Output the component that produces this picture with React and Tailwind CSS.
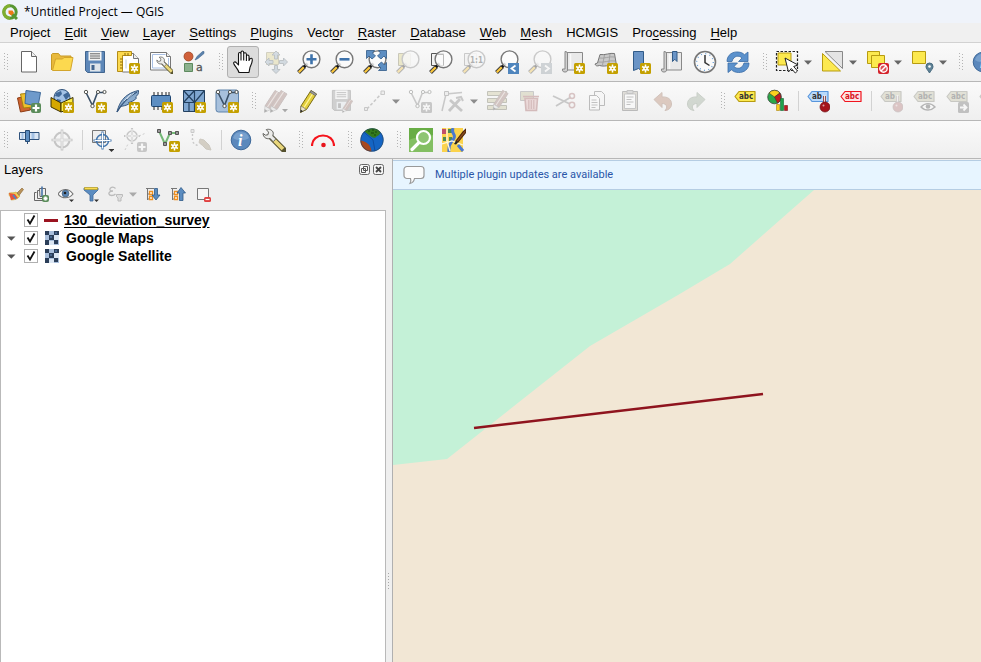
import React from "react";

const G = "#555753";

function Svg({ size = 24, children, className = "" }) {
  return (
    <svg width={size} height={size} viewBox={`0 0 ${size} ${size}`} fill="none" className={`shrink-0 ${className}`} aria-hidden="true">
      {children}
    </svg>
  );
}

/* ---------- shared pieces ---------- */

function Star({ x = 13, y = 13, color = "#c4a000" }) {
  return (
    <g transform={`translate(${x} ${y})`}>
      <rect width="11" height="11" rx="1.5" fill={color} />
      <path d="M5.5 1.6v7.8M2.1 3.5l6.8 4M8.9 3.5l-6.8 4" stroke="#fff" strokeWidth="1.5" />
      <circle cx="5.5" cy="5.5" r="2.2" fill="#fff" />
      <circle cx="5.5" cy="5.5" r=".8" fill={color} />
    </g>
  );
}

function Plus({ x = 14, y = 14, color = "#5a8c5a", s = 10 }) {
  return (
    <g transform={`translate(${x} ${y})`}>
      <rect width={s} height={s} rx="2" fill={color} />
      <path d={`M${s / 2} 1.5v${s - 3}M1.5 ${s / 2}h${s - 3}`} stroke="#fff" strokeWidth="2.2" />
    </g>
  );
}

function Lens({ children }) {
  return (
    <>
      <path d="M1.5 22.5l6-6" stroke="#3c3c3c" strokeWidth="4" />
      <path d="M1.8 22.2l5-5" stroke="#fcc83c" strokeWidth="2.2" />
      <path d="M7 17l3.5-3.5" stroke="#111" strokeWidth="2.6" />
      <circle cx="14.5" cy="9.3" r="8.4" fill="#fbfbfb" fillOpacity=".85" stroke="#777" strokeWidth="1.4" />
      {children}
    </>
  );
}

function Tag({ fill, stroke, color = "#333", text = "abc" }) {
  return (
    <>
      <path d="M6 2.5h16v10H6L2 7.5z" fill={fill} stroke={stroke} strokeWidth="1.2" strokeLinejoin="round" />
      {text && (
        <text x="6" y="10.4" fontSize="8" fontWeight="bold" fontFamily="DejaVu Sans Condensed, DejaVu Sans, sans-serif" fill={color}>
          {text}
        </text>
      )}
    </>
  );
}

function Nodes({ color = G, line = "#3a5068" }) {
  return (
    <>
      <path d="M3 3.5l6.5 13 5-13h7" stroke={line} strokeWidth="1.6" />
      <g fill="#fff" stroke={color}>
        <circle cx="3" cy="3" r="1.7" />
        <circle cx="9.5" cy="17" r="1.7" />
        <circle cx="15" cy="3" r="1.6" />
        <circle cx="21.5" cy="3" r="1.6" />
      </g>
    </>
  );
}

function Pencil({ fill = "#e3cf3c", edge = "#7a6b12" }) {
  return (
    <>
      <path d="M3 17L13 1.5l5.5 3.5-10 15.5-6 3z" fill={fill} stroke={edge} strokeLinejoin="round" />
      <path d="M6 18.5L15.5 3.5" stroke="#fff59c" strokeWidth="1.3" />
      <path d="M13 1.5l5.5 3.5-1 1.8L12 3.2z" fill="#999" stroke="#666" strokeWidth=".7" />
      <path d="M3 17l-.6 6.3 5.8-3z" fill="#eee5c8" stroke="#666" strokeWidth=".6" />
      <path d="M2.7 20.5l-.3 3 2.5-1.3z" fill="#222" />
    </>
  );
}

function DullPencil() {
  return (
    <>
      <path d="M3 17L13 1.5l6 3.5-10 15.500z" fill="#946c64" stroke="#7c6460" strokeLinejoin="round" />
      <path d="M5.500 18L15.500 3" stroke="#d9c9c4" strokeWidth="1.200" />
      <path d="M3 17l-.6 6.300 6.400-2.800z" fill="#ddd" stroke="#666" strokeWidth=".600" />
      <path d="M2.700 20l-.3 3.500 3-1.500z" fill="#333" />
    </>
  );
}

function Floppy({ body = "#5d87b8", edge = "#41658f" }) {
  return (
    <>
      <path d="M2.5 1.5h19v21H4.5l-2-2z" fill={body} stroke={edge} strokeLinejoin="round" />
      <path d="M5.5 1.5h13v9h-13z" fill="#f4f4f4" />
      <path d="M7 3.8h10M7 6h10M7 8.2h10" stroke="#555" strokeWidth=".9" />
      <path d="M7 13.5h10.5v8H7z" fill="#dfe5ea" />
      <path d="M8.5 15h3v5h-3z" fill={edge} />
    </>
  );
}

function Wrench() {
  return (
    <>
      <path d="M10 10l12 12" stroke="#55512f" strokeWidth="5.8" strokeLinecap="round" />
      <path d="M11 11l10 10" stroke="#ead77b" strokeWidth="3.8" />
      <path d="M1 5.5l2.5 1.700L6 6.700l.5-2.600L4.300 1.600c3-1 6.500.4 7 3.600L10.800 8l3 3-2.600 2.600-3.200-3.100C4 11.500 1.200 9 1 5.500z" fill="#ececea" stroke="#60605c" />
    </>
  );
}

function Thermo({ tone = "#a5141b", edge = "#701015" }) {
  return (
    <>
      <path d="M18.500 7v9" stroke={edge} strokeWidth="3" />
      <path d="M18.500 6v9" stroke="#e8e8e8" strokeWidth="1.600" />
      <circle cx="19" cy="18" r="5" fill={tone} stroke={edge} strokeWidth=".7" />
      <circle cx="17.5" cy="16.5" r="1" fill="#fff" opacity=".6" />
    </>
  );
}

const Target = ({ a = "#707070", cx = 12, cy = 12, r = 7.5, w = 2 }) => (
  <>
    <circle cx={cx} cy={cy} r={r} stroke={a} strokeWidth={w} />
    <path d={`M${cx} ${cy - r - 3}V${cy + r + 3}M${cx - r - 3} ${cy}H${cx + r + 3}`} stroke={a} strokeWidth={w + 0.6} />
    <path d={`M${cx} ${cy - r - 2}V${cy + r + 2}M${cx - r - 2} ${cy}H${cx + r + 2}`} stroke="#fff" strokeWidth="1" />
  </>
);

const Scroll = () => (
  <>
    <path d="M4 2.5h17.500v17.500H6" fill="#e9e9e9" stroke="#888" />
    <path d="M4 1.500c2 0 2.500 1 2.500 2.500v16c0 1.500-1 2-2.500 2s-2.500-.500-2.500-2v-1H4z" fill="#cfcfcf" stroke="#888" />
    <path d="M9.500 19V4" stroke="#f9f9f9" strokeWidth="1.500" />
  </>
);

const DashedBox = () => <path d="M1.5 1.500h21v19h-21z" stroke="#222" strokeWidth="1.2" strokeDasharray="2.5 1.5" />;

const CornerArrow = () => <path d="M18 20h6l-3 3.2z" fill="#222" />;

/* ---------- toolbar icons ---------- */

const icons = {
  newFile: (
    <>
      <path d="M4.5 1.5h10l5 5v15.5h-15z" fill="#fff" stroke="#666" strokeLinejoin="round" />
      <path d="M14.5 1.5v5h5" fill="#eee" stroke="#666" />
    </>
  ),
  open: (
    <>
      <path d="M1.5 20V4.5l1-1h6l2 2.5h10.5v4" fill="#e8b93c" stroke="#c79a26" />
      <path d="M2.5 20.500L5.500 9h7l1.500-1.500h9l-2.500 13z" fill="#fcd94f" stroke="#d3a52c" strokeLinejoin="round" />
    </>
  ),
  save: <Floppy />,
  newLayout: (
    <>
      <path d="M6.5 3.500h11l5 5V22h-16z" fill="#fff" stroke="#777" />
      <path d="M17.500 3.500v5h5" fill="#eee" stroke="#777" />
      <path d="M1.500 1.500h14v4h-9v16h-5z" fill="#fcd94f" stroke="#b38c17" />
      <path d="M4 9h2.500M4 12h2.500M4 15h2.500M4 18h2.500M9 3v2.500M12 3v2.500" stroke="#8a6a0c" />
      <path d="M10 9.500v9" stroke="#bcd" />
      <Star />
    </>
  ),
  layoutManager: (
    <>
      <path d="M1.5 2.500h16l4 4V20h-20z" fill="#fff" stroke="#777" />
      <path d="M3.500 4.500h13M3.500 4.500V18h16V8" stroke="#a9c0e4" />
      <path d="M17.500 2.500v4h4" fill="#eee" stroke="#777" />
      <g transform="translate(7 6) scale(.75)"><Wrench /></g>
    </>
  ),
  style: (
    <>
      <circle cx="6.500" cy="6.500" r="4.500" fill="#d0603a" stroke="#9c4120" strokeWidth=".8" />
      <path d="M13 10l2-3.500 5.500-5h1.500v2L16 8.500z" fill="#5b83ad" stroke="#41658f" strokeWidth=".6" />
      <path d="M2.500 13.500h8V21.500h-8z" fill="#8cb18d" stroke="#5d8a5e" />
      <text x="14" y="21" fontSize="11" fontFamily="DejaVu Sans, sans-serif" fill="#555" stroke="#555" strokeWidth=".3">a</text>
    </>
  ),
  pan: (
    <path
      d="M8 22.500c-1-4-4.500-6.500-5.300-9-.4-1.600 1.500-2.300 2.600-.9L7.500 15V4c0-2 2.300-2 2.500 0V2.500c0-2 2.500-2 2.700 0V4c.2-1.800 2.500-1.700 2.700.2V6c.4-1.500 2.500-1.400 2.600.4l.3 3.600c1.500-2.600 3.300-2 3 .4-.2 2.600-1.500 5-2.300 7l-1 5.100zM10 4v6.500M12.700 3.500v7M15.400 4.500v6.500M18 7v4"
      fill="#fff" stroke="#111" strokeWidth="1.1" strokeLinejoin="round"
    />
  ),
  panSel: (
    <>
      <path d="M2.500 2.500h12v12h-12z" fill="#d8ce82" stroke="#8f895f" />
      <g fill="#94aabc" stroke="#4f5f68" strokeWidth=".9">
        <path d="M12 1l4 4h-2.500v4h-3V5H8zM12 23.500l-4-4h2.500v-4h3v4H16zM1 12l4-4v2.500h4v3H5V16zM23.500 12l-4-4v2.500h-4v3h4V16z" />
      </g>
    </>
  ),
  zoomIn: <Lens><path d="M14.500 4.300v10M9.500 9.300h10" stroke="#3f73ab" strokeWidth="2.600" /></Lens>,
  zoomOut: <Lens><path d="M9.500 9.300h10" stroke="#3f73ab" strokeWidth="2.600" /></Lens>,
  zoomFull: (
    <>
      <Lens />
      <g fill="#5d8ec2" stroke="#315b88" strokeWidth=".8">
        <path d="M3.500.500h8L9.500 3l3 3L9 9 6 6 3.500 8.500zM23.500.500h-8L17.500 3l-3 3L18 9l3-3 2.500 2.500zM23.500 20.500h-8l2.500-2.500-3-3 3.500-3 3 3 2-2.500z" />
      </g>
    </>
  ),
  zoomSel: (
    <>
      <path d="M2.500 3.500h12v12h-12z" fill="#d8cf78" stroke="#77734c" />
      <Lens />
    </>
  ),
  zoomLayer: (
    <>
      <path d="M2.500 3.500h12v12h-12z" fill="#f3f3f3" stroke="#555" />
      <Lens><path d="M9 4.500h5.500v11" stroke="#bbb" /></Lens>
    </>
  ),
  zoomNative: (
    <>
      <path d="M2.500 3.500h12v12h-12z" fill="#eee" stroke="#777" />
      <Lens><text x="8" y="12.500" fontSize="8" fontWeight="bold" fontFamily="DejaVu Sans Condensed, sans-serif" fill="#333">1:1</text></Lens>
    </>
  ),
  zoomLast: (
    <Lens>
      <path d="M13 13h11v11H13z" fill="#4f85bd" /><path d="M20.500 15.500l-4 3 4 3" stroke="#fff" strokeWidth="1.800" />
    </Lens>
  ),
  zoomNext: (
    <Lens>
      <path d="M13 13h11v11H13z" fill="#8c979f" /><path d="M17 15.500l4 3-4 3" stroke="#fff" strokeWidth="1.800" />
    </Lens>
  ),
  newMap: <><Scroll /><Star /></>,
  newMap3d: (
    <>
      <path d="M6 4.500c5 1 10-2 14.500-1l2 12c-6-2-10 2-17 0-3 1-4 0-4.500-1.500L3.500 13z" fill="#c9c9c9" stroke="#777" />
      <path d="M5 8c5 1 10-2 16-1M4 12c6 1 11-2 17-1M10.500 5l-2 10M16 4l-1.500 12" stroke="#999" strokeWidth=".8" />
      <Star />
    </>
  ),
  newBookmark: <><path d="M6.500 1.500h10V22l-5-3.500-5 2z" fill="#6a94c6" stroke="#315b88" /><Star /></>,
  bookmarks: <><Scroll /><path d="M12.500 1.500h4.500v10l-2.200-2.200-2.300 2.200z" fill="#6a94c6" stroke="#315b88" /></>,
  clock: (
    <>
      <circle cx="12" cy="12" r="10.500" fill="#fafafa" stroke="#777" strokeWidth="1.600" />
      <circle cx="12" cy="12" r="8.300" stroke="#6aa0d8" strokeWidth="1.300" strokeDasharray="1 3.350" />
      <path d="M12 5v7.500l4.500 3" stroke="#333" strokeWidth="1.500" />
    </>
  ),
  refresh: (
    <g fill="#5b91cc" stroke="#3a6ca6" strokeWidth=".8" strokeLinejoin="round">
      <path d="M1 11.500c0-7 6-10 11-9.500 3 .2 5 1.200 6.500 2.700L22 2v9.500h-9.500L16 8c-3-3-8.500-2.500-10 3.500z" />
      <path d="M23 13c0 6.500-5.500 9.800-10.500 9.500-3 0-5.500-1.200-7-2.700L2 22.500V13h9.500L8 16.500c3 3 8.500 2.500 10-3.500z" />
    </g>
  ),
  select: (
    <>
      <path d="M3 3h13v12H3z" fill="#fce94f" stroke="#b79b10" />
      <DashedBox />
      <path d="M10 8l3.500 14 2.800-3.500 4 4.500 2.200-2-3.800-4.500L23 15z" fill="#fff" stroke="#222" strokeLinejoin="round" />
    </>
  ),
  selectValue: (
    <>
      <path d="M5 1.500h17.500v17z" fill="#e4e4e4" stroke="#888" />
      <path d="M2.500 3.500v17.500h18z" fill="#fce94f" stroke="#b79b10" />
    </>
  ),
  deselect: (
    <>
      <path d="M2.500 1.500h12v12h-12z" fill="#fce94f" stroke="#b79b10" />
      <path d="M6.500 5.500h13v12h-13z" fill="#fce94f" stroke="#b79b10" />
      <rect x="13" y="13" width="11" height="11" rx="2" fill="#d4232b" />
      <circle cx="18.500" cy="18.500" r="3.700" fill="#fff" fillOpacity=".2" stroke="#fff" strokeWidth="1.400" />
      <path d="M21 16l-5 5" stroke="#fff" strokeWidth="1.400" />
    </>
  ),
  selectLoc: (
    <>
      <path d="M2.500 1.500h13v12h-13z" fill="#fce94f" stroke="#b79b10" />
      <path d="M19.500 23c-1.500-3-3.500-4-3.500-6.500a3.500 3.500 0 017 0c0 2.500-2 3.500-3.500 6.500z" fill="#5f8397" stroke="#46697e" />
      <circle cx="19.500" cy="16.500" r="1.300" fill="#fff" />
    </>
  ),
  info: (
    <>
      <circle cx="12" cy="12" r="9.800" fill="#5b88bc" stroke="#3d6899" />
      <path d="M4 10a8.300 8.300 0 0116 0c-4 3-12 3-16 0z" fill="#8bb0d8" opacity=".6" />
      <text x="9" y="17.500" fontSize="16" fontWeight="bold" fontStyle="italic" fontFamily="Liberation Serif, serif" fill="#fff">i</text>
    </>
  ),
  dataSource: (
    <>
      <path d="M.500 9l10-2 3 14-10 2z" fill="#cf6430" stroke="#8d3c14" />
      <path d="M3.500 5l11-1 1 14-9 1z" fill="#eec02d" stroke="#a8830d" />
      <path d="M9 1.500l14.500 2-2.500 14-13-3z" fill="#6e9acb" stroke="#3d6899" />
      <Plus />
    </>
  ),
  geopackage: (
    <>
      <circle cx="12" cy="8.500" r="8" fill="#a3c2e6" stroke="#2d5078" />
      <path d="M6 4l5-2 1 3-3 3-4-1zM13 6l5-3 1.500 4-3.500 4zM7 10l4 1-1 3H6z" fill="#3f6797" />
      <path d="M1 8.500l10 5.500v9L1 18z" fill="#d6a800" stroke="#3b3000" />
      <path d="M11 14l12-5.500V19l-12 4z" fill="#fced4a" stroke="#3b3000" />
      <Star />
    </>
  ),
  shapefile: <><Nodes /><Star /></>,
  spatialite: (
    <>
      <path d="M1 23c2-8 6-18 21.500-21.500.500 3-1 5-3 6.500l1 1c-2 3-6 4-8 4.500l1 1C10 17 6 17 4.500 17.500z" fill="#8aabcd" stroke="#35567e" />
      <path d="M1 23C6 14 12 8 21 3" stroke="#35567e" strokeWidth="1.200" />
      <path d="M8 12l7-7M11 10l7-6" stroke="#e0ebf6" strokeWidth=".8" />
      <Star />
    </>
  ),
  memory: (
    <>
      <path d="M5 3v18M9 3v18M13 3v18M17 3v8M20 3v8" stroke="#222" />
      <rect x="2.500" y="6.500" width="19" height="11" rx="1" fill="#5d8ec2" stroke="#1f4570" />
      <Star />
    </>
  ),
  mesh: (
    <>
      <path d="M1.500 1.500h21v21h-21z" fill="#7fa6d0" stroke="#23405f" />
      <path d="M1.500 1.500l11 12 10-12M1.500 13.500l11-12M1.500 13.500h21M12.500 1.500v21M7 13.500v9" stroke="#23405f" strokeWidth="1.200" />
      <Star />
    </>
  ),
  gpx: (
    <>
      <rect x="1" y="1" width="22.500" height="22" rx="2.500" fill="#a7c0dc" stroke="#5d82ab" />
      <Nodes /><Star />
    </>
  ),
  pencils: (
    <>
      <g transform="translate(-2 0)"><DullPencil /></g>
      <g transform="translate(4 0)"><DullPencil /></g>
    </>
  ),
  pencil: <g transform="translate(1 0)"><Pencil /></g>,
  saveEdits: <><g transform="scale(.95)"><Floppy body="#8d8d8d" edge="#666" /></g><g transform="translate(11 9) scale(.62)"><DullPencil /></g></>,
  digitize: (
    <>
      <path d="M4 20L19 4" stroke="#777" strokeWidth="1.500" strokeDasharray="3 2" />
      <path d="M1.500 18.500h3v3h-3zM18 2h3.500v3.500H18z" fill="#ddd" stroke="#777" />
    </>
  ),
  addLine: <><Nodes line="#777" /><Star color="#777" /></>,
  vertex: (
    <>
      <path d="M1 22L5 5l16-1.500" stroke="#777" strokeWidth="1.500" />
      <path d="M3.500 2.500h4v4h-4z" fill="#ddd" stroke="#666" />
      <path d="M9 11l12 11M19 10L8 22" stroke="#777" strokeWidth="2.800" /><path d="M15 9l5-1 2 4" stroke="#777" strokeWidth="2" />
    </>
  ),
  attrs: (
    <>
      <path d="M1.500 2.500h19v4h-19zM1.500 9.500h19v4h-19zM1.500 16.500h19v4h-19z" fill="#c4c093" stroke="#66664f" />
      <g transform="translate(5 0) scale(.9)"><DullPencil /></g>
    </>
  ),
  trash: (
    <>
      <path d="M1.500 2.500h13v9h-13z" fill="#bab68c" stroke="#777" />
      <path d="M4 7.500h16M6 9.500h12.500l-1 12H7z" fill="#dba8a8" stroke="#9c5555" strokeWidth="1.600" />
      <path d="M9.800 11v9M12.300 11v9M14.800 11v9" stroke="#9c5555" strokeWidth="1.200" />
    </>
  ),
  cut: (
    <>
      <path d="M1 7l17 8M4 17l15-9" stroke="#777" strokeWidth="1.800" />
      <circle cx="20" cy="7" r="2.500" stroke="#a06868" strokeWidth="1.500" />
      <circle cx="20" cy="16" r="2.700" stroke="#a06868" strokeWidth="1.500" />
    </>
  ),
  copy: (
    <>
      <path d="M9.500 2.500h7l3 3v11h-10z" fill="#f6f6f6" stroke="#555" />
      <path d="M4.500 6.500h7l3 3V21h-10z" fill="#fff" stroke="#555" />
      <path d="M6.500 11h5M6.500 13.500h6M6.500 16h6M6.500 18.500h4" stroke="#666" />
    </>
  ),
  paste: (
    <>
      <path d="M4.500 2.500h15V21.500h-15z" fill="#b8b0a0" stroke="#555" />
      <path d="M6.500 5h11v14.500h-11z" fill="#fff" stroke="#777" />
      <path d="M9 1.500h6v3H9z" fill="#aaa" stroke="#666" />
      <path d="M8.500 8h7M8.500 10.500h5M8.500 13h7M8.500 15.500h4" stroke="#666" />
    </>
  ),
  undo: <path d="M3 10.500l8-7V8c6-.500 9.500 2.500 9.500 7 0 3.500-2.500 6-6.500 6.500 3-3 2-7-3-7v4z" fill="#b07a60" stroke="#8f6650" />,
  redo: <path d="M21 10.500l-8-7V8c-6-.500-9.500 2.500-9.500 7 0 3.500 2.500 6 6.500 6.500-3-3-2-7 3-7v4z" fill="#93a48f" stroke="#7b8a78" />,
  label: <Tag fill="#fce94f" stroke="#b79b10" />,
  diagram: (
    <>
      <circle cx="8.500" cy="8" r="6.800" fill="#2ba84a" stroke="#333" strokeWidth=".7" />
      <path d="M8.500 8L3 4a7 7 0 0111 0z" fill="#fccf1e" stroke="#333" strokeWidth=".5" />
      <path d="M8.500 8L14 4c2 4 1 8-2.500 10.200z" fill="#c01a20" stroke="#333" strokeWidth=".5" />
      <path d="M10.500 15.500h3v6h-3z" fill="#fccf1e" stroke="#a8830d" strokeWidth=".6" />
      <path d="M14.500 9.500h3v12h-3z" fill="#1fa04a" stroke="#14612d" strokeWidth=".6" />
      <path d="M18.500 16.500h3v5h-3z" fill="#c01a20" stroke="#7a0d12" strokeWidth=".6" />
    </>
  ),
  pinLabel: <><Tag fill="#b9d9fb" stroke="#5795dc" text="ab" /><Thermo /></>,
  redLabel: <Tag fill="#fde4e4" stroke="#f0141e" color="#d8141c" />,
  dLabelPin: <><Tag fill="#bdbb9c" stroke="#77776a" text="ab" /><Thermo tone="#b07070" edge="#7a6464" /></>,
  dLabelEye: (
    <>
      <Tag fill="#bdbb9c" stroke="#77776a" />
      <path d="M9 18c4-4.500 10-4.500 14 0-4 4-10 4-14 0z" fill="#fff" stroke="#444" strokeWidth="1.400" /><circle cx="16" cy="17.500" r="2.300" fill="#444" />
    </>
  ),
  dLabelMove: (
    <>
      <Tag fill="#bdbb9c" stroke="#77776a" />
      <rect x="13" y="13" width="11" height="11" rx="1.500" fill="#666" /><path d="M15 18.500h6M18.500 15.500l3 3-3 3" stroke="#fff" strokeWidth="1.800" />
    </>
  ),
  dLabelRotate: <Tag fill="#bdbb9c" stroke="#77776a" text="" />,
  gps: (
    <>
      <path d="M2.500 4.500h7v7h-7zM12.500 4.500h9.500v7h-9.500z" fill="#dbe7f5" stroke="#2f527c" />
      <path d="M14.500 5h3v6h-3zM4.500 5h2v6h-2z" fill="#a5c2e4" />
      <path d="M8.500 2.500h4v11h-4z" fill="#5d8ec2" stroke="#274a72" />
      <path d="M10.500 13.500v2.500" stroke="#2f527c" />
    </>
  ),
  target: <Target />,
  targetBlue: (
    <>
      <path d="M2.500 2.500h13v12h-13z" fill="#eee" stroke="#777" />
      <Target a="#3f73ab" cx={12.5} cy={12.5} r={6} w={1.5} />
      <path d="M18.500 21h6l-3 3z" fill="#333" />
    </>
  ),
  targetAdd: <><Target cx={9} cy={8} r={5} w={1.5} /><path d="M2 22l3-6M16 8l7-3" stroke="#888" strokeDasharray="2 2" /><Plus x={14} y={14} color="#777" /></>,
  greenLine: (
    <>
      <path d="M3 3l6 13 5-11h8" stroke="#74b877" strokeWidth="2" />
      <path d="M1.500 1.500h3v3h-3zM7.500 14.500h3v3h-3zM12.500 3.500h3v3h-3zM19.500 3.500h3v3h-3z" fill="#999" stroke="#555" />
      <Star />
    </>
  ),
  erase: (
    <>
      <path d="M3.500 6v6c0 3 3 5 7 6" stroke="#777" strokeWidth="1.300" strokeDasharray="2 2" />
      <path d="M2 1.500h3v3H2z" fill="#ccc" stroke="#777" />
      <path d="M11 11l4 1 5 5 2 5-5-1-3.500-3.500-3.500-3z" fill="#998c70" stroke="#857a62" />
    </>
  ),
  wrench: <Wrench />,
  arc: <><path d="M1 18c0-14 22-14 22 0" stroke="#f5141c" strokeWidth="2.200" /><circle cx="12.500" cy="17" r="2.300" fill="#e8141c" /></>,
  globe: (
    <>
      <circle cx="12" cy="12" r="11.500" fill="#1565c4" />
      <path d="M4.500 3.500C9-1.500 18-.500 20.500 4.500c-1 3-3 3-5 5-3 1-4-1-6-2z" fill="#347a1c" />
      <path d="M.500 12.500C5 13 11 16 11.500 23.500 4 23.500 0 17 .500 12.500z" fill="#a8481f" />
      <path d="M4 4l9 8 2 11" stroke="#0e4da0" strokeWidth="1" />
      <circle cx="12" cy="12" r="11.300" stroke="#2a4156" strokeWidth=".6" />
      <path d="M8 3h2M12 2h2M11 5h3M15 4h2M14 7h2" stroke="#14480a" />
    </>
  ),
  greenSearch: (
    <>
      <path d="M0 0h24v24H0z" fill="#68ad45" /><path d="M0 12c8-4 16-2 24-5v17H0z" fill="#83bf62" />
      <path d="M3 21.500l7-7" stroke="#fff" strokeWidth="3.200" strokeLinecap="round" />
      <circle cx="14.500" cy="9.500" r="6.500" stroke="#fff" strokeWidth="2.200" fill="#8ec572" />
    </>
  ),
  mapEdit: (
    <>
      <path d="M0 0h21v24H0z" fill="#fbd34c" />
      <path d="M0 1h4v5H0z" fill="#c0506a" /><path d="M6 1h4v4H6zM1 9h3v4H1zM7 9h3v5H7z" fill="#4c8b54" />
      <path d="M11 0c-2 6 3 6 1 10s-6 5-5 14M16 17l5 6" stroke="#4a78d0" strokeWidth="3" />
      <path d="M0 16l10-3 11 4M5 0v13l3 10" stroke="#fff8dc" strokeWidth="1.300" />
      <path d="M14 13l7-9 3-3v3l-8 10z" fill="#8e4d1d" stroke="#4e270a" strokeWidth="1.200" />
      <path d="M12 16l2-3 2 1.500-2 2z" fill="#222" />
    </>
  ),
};

/* ---------- toolbar building blocks ---------- */

const Handle = ({ first }) => (
  <span className={`flex shrink-0 justify-end ${first ? "w-3 pr-1" : "w-[15px] pr-[3px]"}`}>
    <svg width="4" height="18" viewBox="0 0 4 18" aria-hidden="true">
      {[0, 3, 6, 9, 12, 15].map((y) => (
        <g key={y} fill="#b4b4b4">
          <rect x="0" y={y} width="1" height="1" />
          <rect x="3" y={y + 1} width="1" height="1" />
        </g>
      ))}
    </svg>
  </span>
);

const Separator = () => (
  <span className="flex w-[6px] shrink-0 justify-center">
    <span className="h-5 w-px bg-[#d2d2d2]" />
  </span>
);

const Caret = ({ off }) => (
  <svg width="8" height="5" viewBox="0 0 8 5" className="mx-[2px] shrink-0" aria-hidden="true">
    <path d="M0 .500h8L4 4.800z" fill={off ? "#8c8c8c" : "#666"} />
  </svg>
);

function Tool({ icon, label, off, menu, active, corner }) {
  return (
    <button
      type="button"
      aria-label={label}
      disabled={off}
      className={`flex h-8 shrink-0 items-center rounded-[3px] border ${active ? "border-[#b0b0b0] bg-[#dcdcdc]" : "border-transparent"}`}
    >
      <span className="flex w-[30px] justify-center">
        <Svg className={off ? "opacity-35" : ""}>{icons[icon]}{corner && <CornerArrow />}</Svg>
      </span>
      {menu && <Caret off={off} />}
    </button>
  );
}

const rows = [
  [
    "|", ["newFile", "New Project"], ["open", "Open Project"], ["save", "Save Project"], ["newLayout", "New Print Layout"],
    ["layoutManager", "Layout Manager"], ["style", "Style Manager"], "|", ["pan", "Pan Map", "active"],
    ["panSel", "Pan Map to Selection", "off"], ["zoomIn", "Zoom In"], ["zoomOut", "Zoom Out"], ["zoomFull", "Zoom Full"],
    ["zoomSel", "Zoom to Selection", "off"], ["zoomLayer", "Zoom to Layer"], ["zoomNative", "Zoom to Native Resolution", "off"],
    ["zoomLast", "Zoom Last"], ["zoomNext", "Zoom Next", "off"], ["newMap", "New Map View"], ["newMap3d", "New 3D Map View"],
    ["newBookmark", "New Spatial Bookmark"], ["bookmarks", "Show Spatial Bookmarks"], ["clock", "Temporal Controller"],
    ["refresh", "Refresh"], "|", ["select", "Select Features", "menu"], ["selectValue", "Select by Value", "menu"],
    ["deselect", "Deselect Features", "menu"], ["selectLoc", "Select by Location", "menu"], "|", ["info", "Identify Features"],
  ],
  [
    "|", ["dataSource", "Data Source Manager"], ["geopackage", "New GeoPackage Layer"], ["shapefile", "New Shapefile Layer"],
    ["spatialite", "New SpatiaLite Layer"], ["memory", "New Temporary Scratch Layer"], ["mesh", "New Mesh Layer"],
    ["gpx", "New GPX Layer"], "|", ["pencils", "Current Edits", "off corner"], ["pencil", "Toggle Editing"],
    ["saveEdits", "Save Layer Edits", "off"], ["digitize", "Digitize with Segment", "off menu"], ["addLine", "Add Line Feature", "off"],
    ["vertex", "Vertex Tool", "off menu"], ["attrs", "Modify Attributes", "off"], ["trash", "Delete Selected", "off"],
    ["cut", "Cut Features", "off"], ["copy", "Copy Features", "off"], ["paste", "Paste Features", "off"], ["undo", "Undo", "off"],
    ["redo", "Redo", "off"], "|", ["label", "Layer Labeling Options"], ["diagram", "Layer Diagram Options"], "-",
    ["pinLabel", "Highlight Pinned Labels"], ["redLabel", "Toggle Unplaced Labels"], "-", ["dLabelPin", "Pin Labels", "off"],
    ["dLabelEye", "Show or Hide Labels", "off"], ["dLabelMove", "Move Label", "off"], ["dLabelRotate", "Rotate Label", "off"],
  ],
  [
    "|", ["gps", "GPS Information"], ["target", "Recenter", "off"], "-", ["targetBlue", "GPS Destination"],
    ["targetAdd", "Add Track Vertex", "off"], ["greenLine", "Create Feature from Track"], ["erase", "Reset Track", "off"], "-",
    ["info", "GPS Information Display"], ["wrench", "GPS Settings"], "|", ["arc", "Plugin Sweep"], "|", ["globe", "Map Tiles"],
    "|", ["greenSearch", "Search Layers"], ["mapEdit", "OpenStreetMap Edit"],
  ],
];

function Toolbar({ items, height }) {
  return (
    <div role="toolbar" className={`flex items-center gap-px overflow-hidden border-b border-[#b7b7b7] bg-linear-to-b from-[#fafafa] to-[#efefef] ${height}`}>
      {items.map((t, i) => {
        if (t === "|") return <Handle key={i} first={i === 0} />;
        if (t === "-") return <Separator key={i} />;
        const f = t[2] || "";
        return (
          <Tool key={i} icon={t[0]} label={t[1]} off={f.includes("off")} menu={f.includes("menu")} active={f === "active"} corner={f.includes("corner")} />
        );
      })}
    </div>
  );
}

/* ---------- menu ---------- */

const menus = [
  ["", "", "Project"], ["", "E", "dit"], ["", "V", "iew"], ["", "L", "ayer"], ["", "S", "ettings"], ["", "P", "lugins"],
  ["Vect", "o", "r"], ["", "R", "aster"], ["", "D", "atabase"], ["", "W", "eb"], ["", "M", "esh"], ["", "", "HCMGIS"],
  ["Pro", "c", "essing"], ["", "H", "elp"],
];

/* ---------- layers panel ---------- */

const Drop = () => <path d="M11 13.500h5l-2.500 2.500z" fill="#333" />;

const layerTools = [
  ["Open Layer Styling", (
    <>
      <path d="M1 7c3-.5 5 0 7-1l4 4c-2 3-5 4-9 4 0-1 .5-1.500 0-2.500-1-1-2-1-2-4.500z" fill="#f0cf55" stroke="#c29626" strokeWidth=".5" />
      <path d="M1 7l6 1 3 4-7 2z" fill="#e7543c" /><path d="M5 9l3 4" stroke="#4a86c8" strokeWidth="1.500" />
      <path d="M9 7l5-5 1.500 1.500-4.500 6z" fill="#b9925a" stroke="#8a6430" strokeWidth=".6" />
    </>
  )],
  ["Add Group", (
    <>
      <path d="M3.500 6.500h-2v8h9M6.500 4.500h-2v8h9M6.500 2.500h6v8h-5.500z" stroke="#666" />
      <path d="M9 .500v10" stroke="#4774a8" strokeWidth="1.600" /><Plus x={9} y={9} s={7} />
    </>
  )],
  ["Manage Map Themes", (
    <>
      <path d="M0 8c4-6 11-6 15 0-4 5-11 5-15 0z" fill="#fff" stroke="#777" strokeWidth="1.200" />
      <circle cx="7.500" cy="7.500" r="3.500" fill="#5b86b5" stroke="#345" strokeWidth=".5" /><circle cx="7" cy="7" r="1.300" fill="#222" /><Drop />
    </>
  )],
  ["Filter Legend", (
    <>
      <path d="M1 2h14v2l-5 5v6H7V9L1 4z" fill="#5b8cc0" stroke="#3d6899" strokeWidth=".8" />
      <path d="M1.500 1.500h13v2h-13z" fill="#fcdc50" stroke="#b79b10" strokeWidth=".6" /><Drop />
    </>
  )],
  ["Filter by Expression", (
    <g stroke="#bbb" fill="none">
      <path d="M7.500 2.500C5 0 1.500 1.500 2 4c.5 1 2 1 3 1-3 0-4.500 1.500-4 3 .6 2 4.500 2 6.500 0" strokeWidth="1.300" />
      <path d="M8.500 8.500h6v2l-1.500 1.500v3h-3v-3l-1.500-1.500z" fill="#dedede" />
    </g>
  ), true],
  ["Expand All", (
    <>
      <path d="M1 2.500h8M2.500 2.500v11.500M2.500 8h2M2.500 13h2" stroke="#777" />
      <path d="M4.500 5.500h3v3h-3zM4.500 10.500h3v3h-3z" fill="#fff" stroke="#f09020" strokeWidth="1.300" />
      <path d="M9.500 2.500h3V9h2.500l-4 5-4-5h2.500z" fill="#5b8cc0" stroke="#315b88" strokeWidth=".8" />
    </>
  )],
  ["Collapse All", (
    <>
      <path d="M1 2.500h6M2.500 2.500v11.500M2.500 8h2M2.500 13h2" stroke="#777" />
      <path d="M4.500 5.500h3v3h-3zM4.500 10.500h3v3h-3z" fill="#fff" stroke="#f09020" strokeWidth="1.300" />
      <path d="M9.500 14.500V7H7l4-5.500 4.500 5.500H13v7.500z" fill="#5b8cc0" stroke="#315b88" strokeWidth=".8" />
    </>
  )],
  ["Remove Layer", (
    <>
      <path d="M2.500 2.500h11v11h-11z" fill="#f6f6f6" stroke="#777" />
      <rect x="9" y="11" width="7" height="5" rx="1.500" fill="#e0403f" /><path d="M10.500 13.500h4" stroke="#fff" strokeWidth="1.200" />
    </>
  )],
];

const layers = [
  { name: "130_deviation_survey", line: true },
  { name: "Google Maps" },
  { name: "Google Satellite" },
];

function LayerRow({ name, line }) {
  return (
    <li className="flex h-[18px] items-center pl-[6px]">
      <span className="w-[17px]">
        {!line && (
          <svg width="9" height="5" viewBox="0 0 9 5" aria-hidden="true"><path d="M0 .500h8.500L4.300 4.800z" fill="#555" /></svg>
        )}
      </span>
      <label className="flex items-center">
        <span className="relative flex">
          <input type="checkbox" defaultChecked className="h-[14px] w-[14px] appearance-none border border-[#b0b0b0] bg-white" />
          <svg width="14" height="14" viewBox="0 0 14 14" className="pointer-events-none absolute inset-0" fill="none" aria-hidden="true">
            <path d="M3.500 6.500L6 10.500l4.500-8" stroke="#111" strokeWidth="1.800" />
          </svg>
        </span>
        {line ? (
          <span className="mx-[6px] h-[3px] w-[14px] bg-[#9b1320]" />
        ) : (
          <svg width="14" height="14" viewBox="0 0 14 14" className="mx-[7px]" aria-hidden="true">
            <path d="M0 0h14v14H0z" fill="#a9bfdc" />
            <path d="M0 0h4v4H0zM9 0h5v4H9zM4 4h5v5H4zM0 9h4v5H0zM9 9h4v4H9z" fill="#2b3e59" />
            <path d="M4 10h5v4H4zM9 4h5v5H9z" fill="#dbe6f3" />
            <path d="M5 5h2v2H5zM10 1h2v2h-2z" fill="#47658c" />
          </svg>
        )}
        <span className={`text-sm font-bold leading-[18px] ${line ? "underline underline-offset-2" : ""}`}>{name}</span>
      </label>
    </li>
  );
}

const PanelButton = ({ label, children }) => (
  <button type="button" aria-label={label} className="flex">
    <svg width="11" height="11" viewBox="0 0 11 11" fill="none" aria-hidden="true">
      <rect x=".5" y=".5" width="10" height="10" rx="2" stroke="#666" fill="#f5f5f5" />
      {children}
    </svg>
  </button>
);

export default function App() {
  return (
    <div className="flex h-screen flex-col overflow-hidden bg-[#efefef] font-['Liberation_Sans',Arial,sans-serif] text-[13px] text-black">
      <header className="flex h-[23px] shrink-0 items-center gap-[6px] bg-[#eff3fa] pl-[2px]">
        <svg width="16" height="16" viewBox="0 0 16 16" fill="none" aria-hidden="true">
          <circle cx="8" cy="8" r="6.2" stroke="#589632" strokeWidth="3" />
          <path d="M8 1.800A6.200 6.200 0 001.800 8 6.200 6.200 0 008 14.200" stroke="#7fae2f" strokeWidth="3" />
          <path d="M8.500 8.500l6.500 6.500" stroke="#589632" strokeWidth="3" />
          <path d="M6.500 6.500h4l1.500 2.500-2.500 2.500-3-2z" fill="#ee7913" />
        </svg>
        <h1 className="font-['Open_Sans','Noto_Sans',sans-serif] text-xs">*Untitled Project — QGIS</h1>
      </header>

      <nav className="flex h-5 shrink-0 items-center gap-[14px] border-b border-[#d2d2d2] bg-[#f0f0f0] pl-[10px]">
        {menus.map(([a, u, b]) => (
          <button type="button" key={a + u + b} className="leading-4">
            {a}<span className="underline underline-offset-2">{u}</span>{b}
          </button>
        ))}
      </nav>

      <div className="shrink-0">
        <Toolbar items={rows[0]} height="h-[39px]" />
        <Toolbar items={rows[1]} height="h-[39px]" />
        <Toolbar items={rows[2]} height="h-[38px]" />
      </div>

      <main className="flex min-h-0 flex-1">
        <aside className="flex w-[386px] shrink-0 flex-col">
          <div className="flex h-[21px] items-center gap-[3px] pl-1 pr-[2px]">
            <h2 className="flex-1">Layers</h2>
            <PanelButton label="Float panel">
              <path d="M4.500 2.500h4v4h-4zM2.500 4.500h4v4h-4z" stroke="#555" fill="#f5f5f5" />
            </PanelButton>
            <PanelButton label="Close panel">
              <path d="M3 3l5 5M8 3L3 8" stroke="#444" strokeWidth="1.800" />
            </PanelButton>
          </div>
          <div role="toolbar" className="flex h-[30px] items-center gap-[9px] pb-[2px] pl-2">
            {layerTools.map(([label, art, menu]) => (
              <button type="button" key={label} aria-label={label} className="flex items-center">
                <Svg size={16}>{art}</Svg>
                {menu && <svg width="8" height="5" viewBox="0 0 8 5" className="ml-[5px] -mr-px" aria-hidden="true"><path d="M0 .500h8L4 4.800z" fill="#aaa" /></svg>}
              </button>
            ))}
          </div>
          <ul className="flex-1 border-t border-r border-l border-[#b9b9b9] bg-white">
            {layers.map((l) => <LayerRow key={l.name} {...l} />)}
          </ul>
        </aside>

        <div className="flex w-[6px] shrink-0 flex-col items-center justify-center bg-[#efefef] pt-[342px]">
          <svg width="2" height="18" viewBox="0 0 2 18" aria-hidden="true">
            {[0, 3, 6, 9, 12, 15].map((y) => <rect key={y} y={y} width="1" height="1" fill="#a8a8a8" />)}
          </svg>
        </div>

        <section className="flex min-w-0 flex-1 flex-col border-l border-[#b0b0b0] pt-px">
          <div role="status" className="flex h-[30px] shrink-0 items-center gap-[10px] border-y border-[#b5cde3] bg-[#e7f5ff] pl-[10px]">
            <svg width="22" height="20" viewBox="0 0 22 20" fill="none" aria-hidden="true">
              <path d="M4 1.500h14a3 3 0 013 3v6a3 3 0 01-3 3h-6.500c-.5 2.500-2 4.500-4.500 5 1-1.500 1-3.500.5-5H4a3 3 0 01-3-3v-6a3 3 0 013-3z" fill="#fcfcfc" stroke="#999" strokeWidth="1.200" />
            </svg>
            <p className="pt-px font-['Roboto','Noto_Sans',sans-serif] text-[11px] text-[#2a55a8]">Multiple plugin updates are available</p>
          </div>
          <div className="min-h-0 flex-1 overflow-hidden bg-[#f2e7d5]">
            <svg width="588" height="472" viewBox="0 0 588 472" role="img" aria-label="Map canvas">
              <path d="M0 0h421L337 74l-52 31-88 51L54 269 0 275z" fill="#c4f1d7" />
              <path d="M81 238l289-34" stroke="#8f141e" strokeWidth="2.500" />
            </svg>
          </div>
        </section>
      </main>
    </div>
  );
}
